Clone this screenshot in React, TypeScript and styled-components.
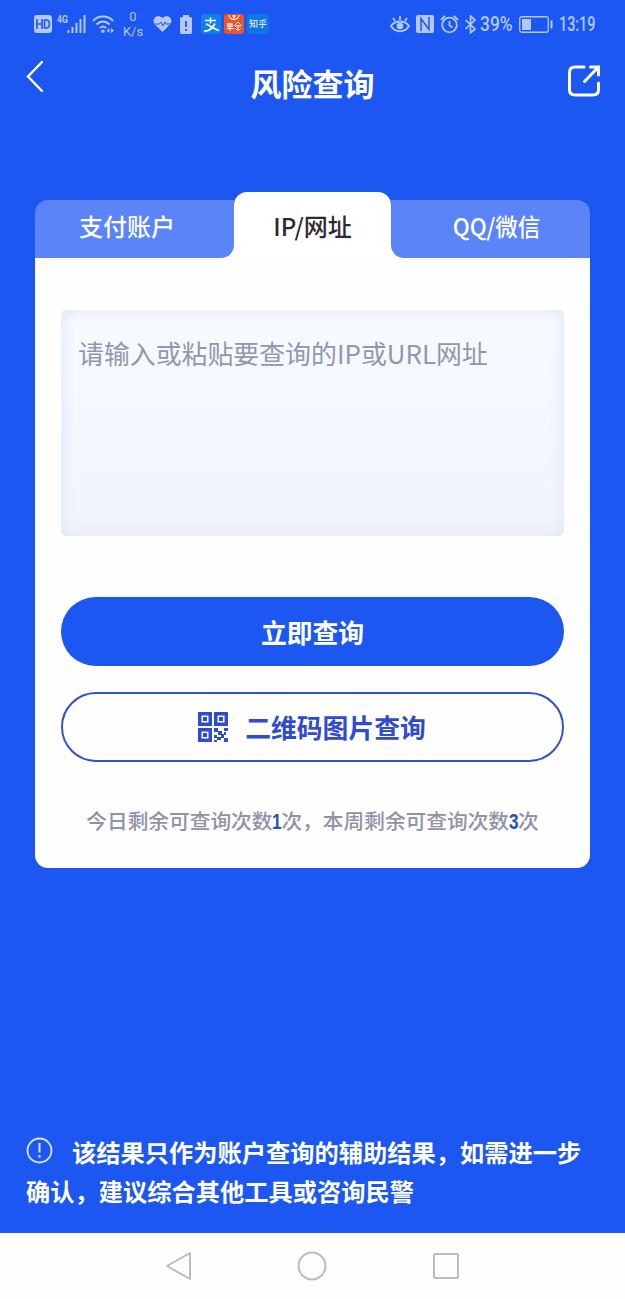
import React from "react";
import styled, { createGlobalStyle } from "styled-components";

const BLUE = "#1b57f0";
const STATUS = "#b4c8ff";

const GlobalStyle = createGlobalStyle`
  * { box-sizing: border-box; }
  body {
    margin: 0;
    background: ${BLUE};
    font-family: "Noto Sans CJK SC", "Noto Sans", sans-serif;
  }
  button { font-family: inherit; padding: 0; border: 0; background: none; }
`;

const Screen = styled.div`
  display: flex;
  flex-direction: column;
  width: 625px;
  height: 1299px;
  background: ${BLUE};
  overflow: hidden;
`;

const StatusBar = styled.div`
  display: flex;
  justify-content: space-between;
  height: 48px;
  padding: 0 31px 0 34px;
  color: ${STATUS};
`;

const StatusGroup = styled.div`
  display: flex;
  align-items: center;
`;

const Glyph = styled.svg<{ $ml?: number }>`
  display: block;
  flex: none;
  margin-left: ${(p) => p.$ml ?? 0}px;
`;

const Speed = styled.div`
  width: 22px;
  margin-left: 7px;
  font: 13px/15px Roboto, sans-serif;
  text-align: center;
  white-space: nowrap;
`;

const AppBadge = styled.div<{ $bg: string; $ml: number; $w: number }>`
  display: flex;
  align-items: center;
  justify-content: center;
  width: ${(p) => p.$w}px;
  height: 20px;
  margin-left: ${(p) => p.$ml}px;
  border-radius: 3px;
  background: ${(p) => p.$bg};
  color: #fff;
  font-size: 9px;
  line-height: 20px;
  white-space: nowrap;
`;

const StatusText = styled.span<{ $w: number; $ml: number; $sx: number }>`
  width: ${(p) => p.$w}px;
  margin-left: ${(p) => p.$ml}px;
  font: 500 20.5px/24px Roboto, sans-serif;
  white-space: nowrap;
  transform: scaleX(${(p) => p.$sx});
  transform-origin: left center;
`;

const Header = styled.header`
  display: grid;
  grid-template-columns: 60px 1fr 60px;
  height: 70px;
  padding: 0 24px;
  color: #fff;
`;

const Title = styled.h1`
  margin: 0;
  font-size: 31px;
  font-weight: 700;
  line-height: 69px;
  text-align: center;
`;

const IconButton = styled.button<{ $end?: boolean }>`
  display: flex;
  justify-content: ${(p) => (p.$end ? "flex-end" : "flex-start")};
  padding-top: ${(p) => (p.$end ? 16 : 12)}px;
  color: #fff;
`;

const Panel = styled.main`
  margin: 74px 35px 0;
`;

const Tabs = styled.div`
  display: flex;
  align-items: flex-end;
  height: 66px;
  background: linear-gradient(transparent 60%, #fff 60%);
`;

const SideTab = styled.button<{ $right?: boolean }>`
  width: 199px;
  height: 58px;
  padding: 0 0 7px ${(p) => (p.$right ? 13 : 0)}px;
  padding-right: ${(p) => (p.$right ? 0 : 15)}px;
  border-radius: ${(p) => (p.$right ? "0 13px 0 13px" : "13px 0 13px 0")};
  background: #5a84f8;
  color: #fff;
  font-size: 24px;
  font-weight: 500;
  line-height: 36px;
`;

const ActiveTab = styled.button`
  width: 157px;
  height: 66px;
  padding-top: 1px;
  border-radius: 13px 13px 0 0;
  background: #fff;
  color: #2c2c30;
  font-size: 24px;
  font-weight: 500;
  line-height: 36px;
`;

const TabLabel = styled.span<{ $sx?: number }>`
  display: inline-block;
  transform: scaleX(${(p) => p.$sx ?? 1});
`;

const Card = styled.section`
  display: flex;
  flex-direction: column;
  height: 610px;
  padding: 52px 26px 0;
  border-radius: 0 0 13px 13px;
  background: #fefefe;
`;

const QueryInput = styled.div`
  height: 226px;
  padding: 24px 17px;
  border-radius: 5px;
  background: linear-gradient(#f7faff, #f1f4fd);
  box-shadow: inset 0 0 16px #dfe2f6;
  color: #9496ae;
  font-size: 25.9px;
  line-height: 37px;
  white-space: nowrap;
`;

const PillButton = styled.button<{ $outline?: boolean }>`
  display: flex;
  flex: none;
  align-items: center;
  justify-content: center;
  gap: 17px;
  height: ${(p) => (p.$outline ? 70 : 69)}px;
  margin-top: ${(p) => (p.$outline ? 26 : 61)}px;
  padding-right: ${(p) => (p.$outline ? 1 : 0)}px;
  border: ${(p) => (p.$outline ? "2px solid #3550c4" : "0")};
  border-radius: 35px;
  background: ${(p) => (p.$outline ? "#fefefe" : BLUE)};
  color: ${(p) => (p.$outline ? "#304bd0" : "#fff")};
  font-size: 25.8px;
  font-weight: 700;
  line-height: 38px;
`;

const Quota = styled.p`
  margin: 42px 0 0;
  color: #9092a8;
  font-size: 20.7px;
  font-weight: 500;
  line-height: 32px;
  text-align: center;
  white-space: nowrap;
`;

const Count = styled.b`
  display: inline-block;
  width: 9px;
  color: #2450b8;
  font: 700 22px/32px "Liberation Sans", sans-serif;
  transform: scaleX(0.78);
  transform-origin: left;
`;

const Notice = styled.footer`
  margin: auto 0 23px;
  padding: 0 20px 0 26px;
  color: #fff;
  font-size: 24.25px;
  font-weight: 700;
  line-height: 39px;
  white-space: nowrap;

  svg { display: inline-block; margin: 0 19px 0 0; vertical-align: -2px; }
`;

const NavBar = styled.nav`
  display: flex;
  flex: none;
  align-items: center;
  justify-content: center;
  gap: 104.5px;
  height: 66px;
  padding-right: 1px;
  background: #fdfdfd;
`;

const QrIcon = () => (
  <Glyph width="30" height="30" viewBox="0 0 30 30" fill="#304bd0">
    <path fillRule="evenodd" d="M0 0h14v14H0zM3.500 3.500v7h7v-7zM16 0h14v14H16zM19.500 3.500v7h7v-7zM0 16h14v14H0zM3.500 19.500v7h7v-7z" />
    <path d="M5 5h4v4H5zM21 5h4v4h-4zM5 21h4v4H5zM16 16h4v4h-4zM20 19h4v4h-4zM26 16h4v3h-4zM23 22h3v4h-3zM26 20h2v3h-2zM16 23h3v3h-3zM19 25h4v3h-4zM16 28h3v2h-3zM26 26h4v4h-4z" />
  </Glyph>
);

export default function App() {
  return (
    <>
      <GlobalStyle />
      <Screen>
        <StatusBar>
          <StatusGroup>
            <Glyph width="18" height="18" viewBox="0 0 18 18">
              <rect width="18" height="18" rx="3" fill={STATUS} />
              <path d="M3 4v10M8 4v10M3 9h5M10.500 5v8h1.500c4.500 0 4.500-8 0-8z" fill="none" stroke={BLUE} strokeWidth="1.600" />
            </Glyph>
            <Glyph $ml={5} width="30" height="20" viewBox="0 0 30 20" fill={STATUS}>
              <text x="0" y="9" fontFamily="Roboto" fontWeight="700" fontSize="10.500" textLength="11" lengthAdjust="spacingAndGlyphs">4G</text>
              <path d="M10.500 16h2v3h-2zM14.500 13h2v6h-2zM18.500 9h2v10h-2zM22.500 5h2v14h-2zM26.500 1h2v18h-2z" />
            </Glyph>
            <Glyph $ml={5} width="23" height="20" viewBox="0 0 23 20" fill="none" stroke={STATUS} strokeWidth="2">
              <path d="M1 7c5-6 15-6 20 0M4.500 10.500c4-4 9-4 13 0M8 14c2-2 4-2 6 0" />
              <circle cx="11" cy="17.300" r="1.700" fill={STATUS} stroke="none" />
              <path d="M17.500 14v5l-3-2.500zM19 14v5l3-2.500z" fill={STATUS} stroke="none" />
            </Glyph>
            <Speed>0<br />K/s</Speed>
            <Glyph $ml={9} width="19" height="18" viewBox="0 0 19 18">
              <path d="M9.500 17L2 9.500C-2.500 4 4.500-2 9.500 3c5-5 12 1 7.500 6.500z" fill={STATUS} />
              <path d="M2 9h4.500l1.500-2 2 4 2-4 1 2h4.500" fill="none" stroke={BLUE} strokeWidth="1" />
            </Glyph>
            <Glyph $ml={8} width="12" height="19" viewBox="0 0 12 19">
              <path d="M3 0h6v2h1.500Q12 2 12 3.500v14Q12 19 10.500 19h-9Q0 19 0 17.500v-14Q0 2 1.500 2H3z" fill={STATUS} />
              <path d="M6 6v6M6 14v2" stroke={BLUE} strokeWidth="1.800" />
            </Glyph>
            <AppBadge $bg="#1180ee" $ml={9} $w={20}>
              <Glyph width="18" height="17" viewBox="0 0 18 17" fill="none" stroke="#fff" strokeWidth="1.700">
                <path d="M3 4.500h11M8.500 1.500v6M13 7.500C10 13 5.500 15.500 2 15M4 8c3 1 7 4.500 13 6.500" />
              </Glyph>
            </AppBadge>
            <AppBadge $bg="#ee5428" $ml={3} $w={20}>
              <Glyph width="20" height="20" viewBox="0 0 20 20" fill="none" stroke="#fff" strokeWidth="1.200">
                <path d="M5 1c0 6 10 6 10 0M8 2h4M10 1v5" />
                <path d="M3 10h6M3 12.500h6M4 10v3M8 10v3M2.500 14.500h7M6 9v8M14 8l-4 4M14 8l4 4M11.500 12h5M14 11v6M11 14l2 2M17 14l-2 2" strokeWidth="1" />
              </Glyph>
            </AppBadge>
            <AppBadge $bg="#0f75e8" $ml={3} $w={22}>知乎</AppBadge>
          </StatusGroup>
          <StatusGroup>
            <Glyph width="20" height="18" viewBox="0 0 20 18" fill="none" stroke={STATUS} strokeWidth="1.800">
              <path d="M1 11c4-6 14-6 18 0-4 7-14 7-18 0zM10 1v4M3 3l2 3M17 3l-2 3" />
              <circle cx="10" cy="11" r="3.300" fill={STATUS} stroke="none" />
            </Glyph>
            <Glyph $ml={6} width="18" height="18" viewBox="0 0 18 18">
              <rect width="18" height="18" rx="2" fill={STATUS} />
              <path d="M5 16V3.500l8 11V2" fill="none" stroke={BLUE} strokeWidth="1.500" />
            </Glyph>
            <Glyph $ml={6} width="19" height="19" viewBox="0 0 19 19" fill="none" stroke={STATUS} strokeWidth="1.800">
              <circle cx="9.500" cy="10" r="7.300" />
              <path d="M9.500 6v4.500l3 2M1 5l4-4M18 5l-4-4" />
            </Glyph>
            <Glyph $ml={5} width="13" height="19" viewBox="0 0 13 19" fill="none" stroke={STATUS} strokeWidth="1.700">
              <path d="M1.500 5l9.500 9-4.500 4V1L11 5l-9.500 9" />
            </Glyph>
            <StatusText $w={34} $ml={3} $sx={0.85}>39%</StatusText>
            <Glyph $ml={5} width="34" height="17" viewBox="0 0 34 17">
              <rect x=".75" y=".75" width="28.500" height="15.500" rx="2" fill="none" stroke={STATUS} strokeWidth="1.300" />
              <path d="M3 3h9v11H3zM31.500 4.500h2v8h-2z" fill={STATUS} />
            </Glyph>
            <StatusText $w={35} $ml={6} $sx={0.7}>13:19</StatusText>
          </StatusGroup>
        </StatusBar>

        <Header>
          <IconButton aria-label="返回">
            <Glyph $ml={2} width="18" height="33" viewBox="0 0 18 33" fill="none" stroke="currentColor" strokeWidth="2.400" strokeLinecap="round">
              <path d="M16 2L2 16.500 16 31" />
            </Glyph>
          </IconButton>
          <Title>风险查询</Title>
          <IconButton $end aria-label="分享">
            <Glyph width="34" height="34" viewBox="0 0 34 34" fill="none" stroke="currentColor" strokeWidth="3" strokeLinecap="round">
              <path d="M17 3H8Q2.500 3 2.500 8.500v17Q2.500 31 8 31h18q5.500 0 5.500-5.500V19M17.500 17.500L31 3.500M23.500 3h8v8" />
            </Glyph>
          </IconButton>
        </Header>

        <Panel>
          <Tabs>
            <SideTab>支付账户</SideTab>
            <ActiveTab><TabLabel>IP/网址</TabLabel></ActiveTab>
            <SideTab $right><TabLabel $sx={0.94}>QQ/微信</TabLabel></SideTab>
          </Tabs>
          <Card>
            <QueryInput>请输入或粘贴要查询的IP或URL网址</QueryInput>
            <PillButton>立即查询</PillButton>
            <PillButton $outline><QrIcon />二维码图片查询</PillButton>
            <Quota>今日剩余可查询次数<Count>1</Count>次，本周剩余可查询次数<Count>3</Count>次</Quota>
          </Card>
        </Panel>

        <Notice>
          <svg width="27" height="27" viewBox="0 0 27 27" fill="none" stroke="#dce7ff" strokeWidth="1.800">
            <circle cx="13.500" cy="13.500" r="12" />
            <path d="M13.500 6v9.500M13.500 18v2.500" strokeWidth="2" />
          </svg>
          该结果只作为账户查询的辅助结果，如需进一步<br />
          确认，建议综合其他工具或咨询民警
        </Notice>

        <NavBar>
          <Glyph width="28" height="30" viewBox="0 0 28 30" fill="none" stroke="#bcbcbe" strokeWidth="2" strokeLinejoin="round">
            <path d="M25 2v26L2 15z" />
          </Glyph>
          <Glyph width="30" height="30" viewBox="0 0 30 30" fill="none" stroke="#bcbcbe" strokeWidth="2">
            <circle cx="15" cy="15" r="13.500" />
          </Glyph>
          <Glyph width="28" height="28" viewBox="0 0 28 28" fill="none" stroke="#bcbcbe" strokeWidth="2">
            <rect x="2" y="2" width="24" height="24" rx="1" />
          </Glyph>
        </NavBar>
      </Screen>
    </>
  );
}
